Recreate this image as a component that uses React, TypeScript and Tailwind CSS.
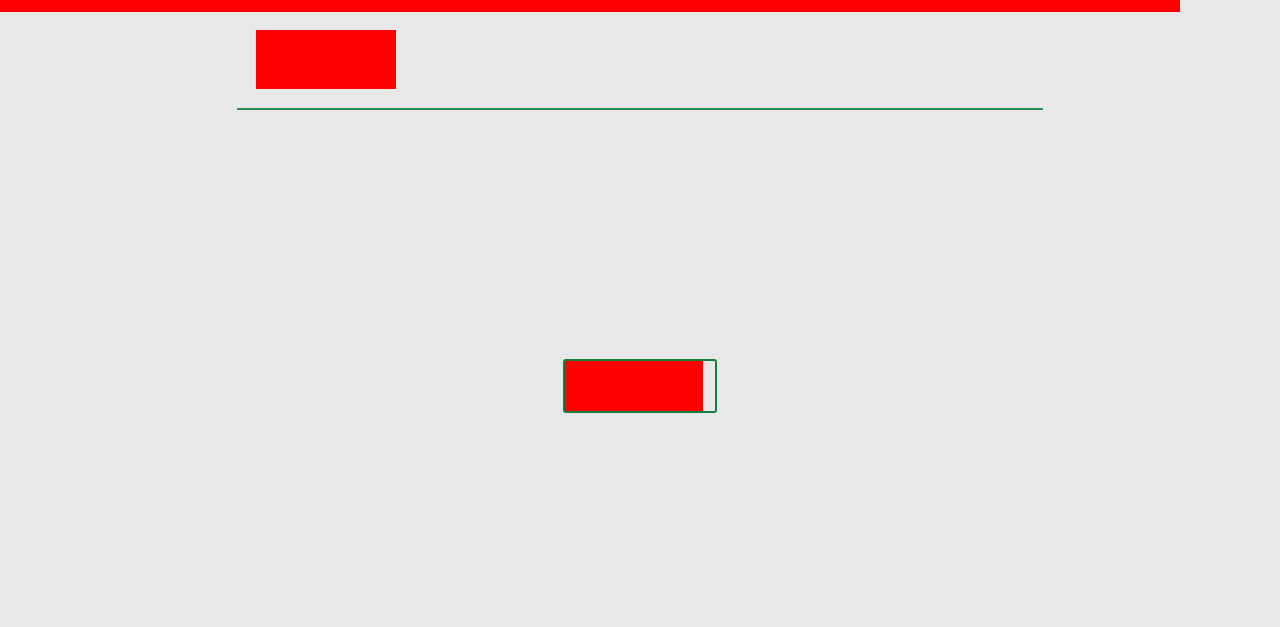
export default function App() {
  return (
    <div className="min-h-screen bg-[#e8e8e8] font-['Liberation_Sans',sans-serif]">
      <div className="h-[11.7px] w-[1180px] bg-[#ff0000]" />
      <div className="mx-auto w-[806px]">
        <header className="flex border-b-2 border-[#2e8b57] pb-[19px] pl-[19px] pt-[18.6px]">
          <div className="h-[58.7px] w-[140px] bg-[#ff0000]" />
        </header>
        <main className="flex justify-center pt-[249.3px]">
          <button className="flex h-[53.4px] w-[153.4px] rounded-[3px] border-2 border-[#137e3e] pr-[11.4px]">
            <span className="h-full flex-1 bg-[#ff0000]" />
          </button>
        </main>
      </div>
    </div>
  );
}
